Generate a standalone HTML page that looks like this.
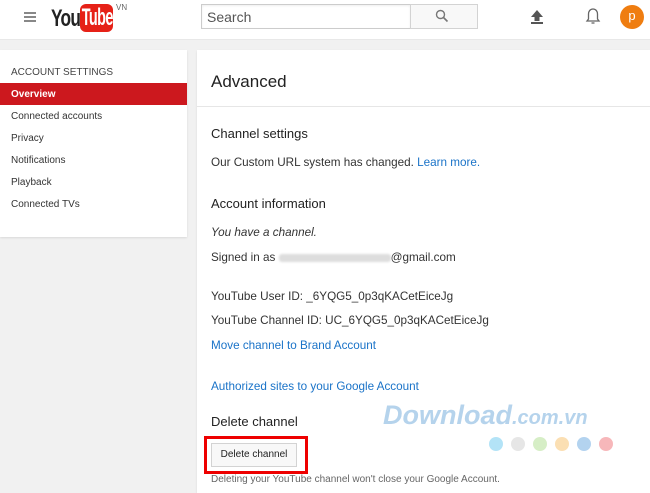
<!DOCTYPE html>
<html><head><meta charset="utf-8"><style>
*{margin:0;padding:0;box-sizing:border-box}
body{width:650px;height:493px;overflow:hidden;background:#f1f1f1;font-family:"Liberation Sans",sans-serif;color:#333;position:relative}
.hdr{position:absolute;left:0;top:0;width:650px;height:40px;background:#fff;border-bottom:1px solid #e8e8e8}
.abs{position:absolute}
.side{position:absolute;left:0;top:50px;width:187px;height:187px;background:#fff;box-shadow:0 1px 2px rgba(0,0,0,.1)}
.side div{position:absolute;left:11px;font-size:10px;color:#333}
.main{position:absolute;left:197px;top:50px;width:453px;height:443px;background:#fff;box-shadow:0 1px 2px rgba(0,0,0,.1)}
.t{position:absolute;left:14px;font-size:11.7px;color:#333;white-space:nowrap}
.h{font-size:13px;color:#222}
a{color:#1a73c8;text-decoration:none}
</style></head><body>
<div class="hdr">
 <div class="abs" style="left:24px;top:12px;width:12px;height:2px;background:#888;box-shadow:0 4px 0 #888,0 8px 0 #888"></div>
 <div class="abs" style="left:51px;top:5px;font:bold 24px 'Liberation Sans',sans-serif;color:#222;letter-spacing:-1px;transform:scaleX(0.72);transform-origin:0 0">You</div>
 <div class="abs" style="left:80px;top:4px;width:33px;height:28px;background:#e62117;border-radius:6px;overflow:hidden"><div style="color:#fff;font:bold 24px 'Liberation Sans',sans-serif;letter-spacing:-1px;transform:scaleX(0.6);transform-origin:0 0;padding-left:3px;line-height:28px;white-space:nowrap">Tube</div></div>
 <div class="abs" style="left:116px;top:3px;font-size:8px;color:#666">VN</div>
 <div class="abs" style="left:201px;top:4px;width:210px;height:25px;border:1px solid #ccc;box-shadow:inset 0 1px 2px #eee;font-size:14px;color:#555;padding:4px 5px">Search</div>
 <div class="abs" style="left:410px;top:4px;width:68px;height:25px;border:1px solid #d3d3d3;background:#f8f8f8"></div>
 <svg class="abs" style="left:435px;top:9px" width="14" height="14"><circle cx="5.5" cy="5.5" r="4" fill="none" stroke="#777" stroke-width="1.4"/><path d="M8.5 8.5L12.5 12.5" stroke="#777" stroke-width="1.6"/></svg>
 <svg class="abs" style="left:529px;top:9px" width="16" height="16"><path d="M8 1L2 8H5.5V12H10.5V8H14Z" fill="#555"/><rect x="2" y="13" width="12" height="2" fill="#555"/></svg>
 <svg class="abs" style="left:585px;top:7px" width="16" height="20"><path d="M8 2C5 2 3.5 4.5 3.5 7V12L2 14H14L12.5 12V7C12.5 4.5 11 2 8 2Z" fill="none" stroke="#666" stroke-width="1.3"/><path d="M6.5 16h3" stroke="#666" stroke-width="1.3"/></svg>
 <div class="abs" style="left:620px;top:5px;width:24px;height:24px;border-radius:50%;background:#ef7d10;color:#fff;font-size:13px;text-align:center;line-height:22px">p</div>
</div>
<div class="side">
 <div style="top:17px;color:#444">ACCOUNT SETTINGS</div>
 <div style="left:0;top:33px;width:187px;height:22px;background:#cc181e"></div>
 <div style="top:39px;color:#fff;font-weight:bold">Overview</div>
 <div style="top:61px">Connected accounts</div>
 <div style="top:83px">Privacy</div>
 <div style="top:105px">Notifications</div>
 <div style="top:127px">Playback</div>
 <div style="top:149px">Connected TVs</div>
</div>
<div class="main">
 <div class="t" style="top:22px;font-size:17px;color:#222">Advanced</div>
 <div class="abs" style="left:0;top:56px;width:453px;height:1px;background:#e6e6e6"></div>
 <div class="t h" style="top:76px">Channel settings</div>
 <div class="t" style="top:106px">Our Custom URL system has changed. <a>Learn more.</a></div>
 <div class="t h" style="top:146px">Account information</div>
 <div class="t" style="top:176px;font-style:italic">You have a channel.</div>
 <div class="t" style="top:201px">Signed in as <span style="display:inline-block;width:112px;height:8px;background:#ddd;border-radius:3px;vertical-align:middle;filter:blur(1px)"></span>@gmail.com</div>
 <div class="t" style="top:240px">YouTube User ID: _6YQG5_0p3qKACetEiceJg</div>
 <div class="t" style="top:264px">YouTube Channel ID: UC_6YQG5_0p3qKACetEiceJg</div>
 <div class="t" style="top:289px"><a>Move channel to Brand Account</a></div>
 <div class="t" style="top:330px"><a>Authorized sites to your Google Account</a></div>
 <div class="t h" style="top:364px">Delete channel</div>
 <div class="abs" style="left:7px;top:386px;width:104px;height:38px;border:3px solid #e00"></div>
 <div class="abs" style="left:14px;top:393px;width:86px;height:24px;border:1px solid #d3d3d3;background:#f8f8f8;font-size:10px;color:#222;text-align:center;line-height:22px">Delete channel</div>
 <div class="t" style="top:424px;font-size:10px;color:#666">Deleting your YouTube channel won't close your Google Account.</div>
 <div class="abs" style="left:186px;top:350px;font:italic bold 27px 'Liberation Sans',sans-serif;color:#b5d3ec;white-space:nowrap">Download<span style="font-size:20px">.com.vn</span></div>
 <div class="abs" style="left:292px;top:387px;width:14px;height:14px;border-radius:50%;background:#b3e3f7;box-shadow:22px 0 #e6e6e6,44px 0 #d6eec6,66px 0 #fbdfb3,88px 0 #b3d3ef,110px 0 #f7b7ba"></div>
</div>
</body></html>
